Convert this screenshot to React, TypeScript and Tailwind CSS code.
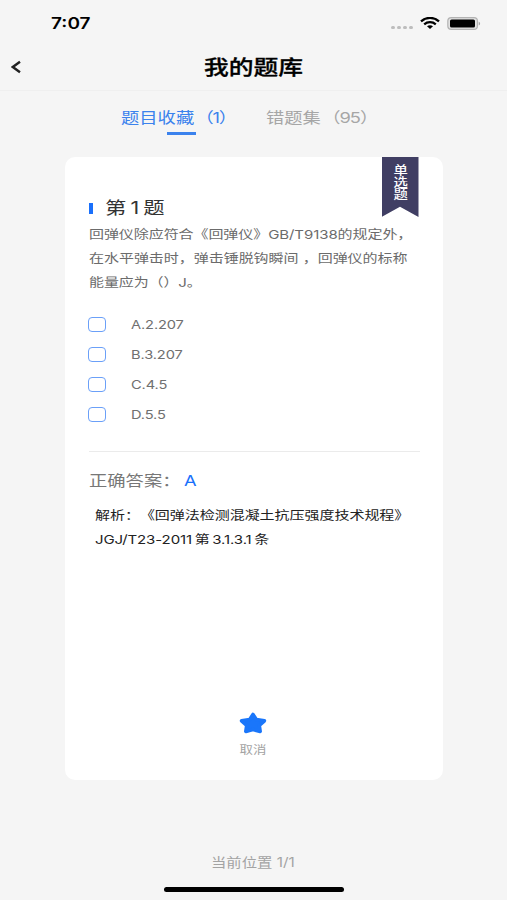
import type { ReactNode } from "react";
import clsx from "clsx";

const question = [
  { text: "回弹仪除应符合《回弹仪》GB/T9138的规定外，", tracking: "tracking-[-0.06px]" },
  { text: "在水平弹击时，弹击锤脱钩瞬间 ，回弹仪的标称", tracking: "tracking-[-0.03px]" },
  { text: "能量应为（）J。", tracking: "tracking-[-0.1px]" },
];

const options = ["A.2.207", "B.3.207", "C.4.5", "D.5.5"];

// Single line of horizontally expanded text
function Wide({
  children,
  className,
  origin = "origin-left",
}: {
  children: ReactNode;
  className?: string;
  origin?: string;
}) {
  return (
    <span className={clsx("block w-max scale-x-[1.22] whitespace-nowrap", origin, className)}>
      {children}
    </span>
  );
}

function StatusBar() {
  return (
    <div className="flex h-11 items-start pl-[51px] pr-[26px] pt-[14px]">
      <Wide className="text-[15.6px] font-semibold leading-[20px] text-black">7:07</Wide>
      <div className="ml-auto flex items-start">
        <div className="mr-[7px] mt-[12px] flex gap-[2px]">
          {[0, 1, 2, 3].map((i) => (
            <span key={i} className="h-[3px] w-[4px] rounded-full bg-[#bdbdbd]" />
          ))}
        </div>
        <svg className="mt-[3px] h-[12px] w-[20px]" viewBox="0 0 20 12" preserveAspectRatio="none" fill="none" stroke="#000" strokeWidth="2.3">
          <path d="M1 4.3C6.1-.2 13.9-.2 19 4.3" />
          <path d="M4.2 7.3C7.5 4.5 12.5 4.5 15.8 7.3" />
          <path d="M7 9.3C8.8 8 11.2 8 13 9.3L10 12Z" fill="#000" stroke="none" />
        </svg>
        <svg className="ml-[7px] mt-[3px] h-[13px] w-[34px]" viewBox="0 0 34 13">
          <rect x=".8" y=".7" width="29.6" height="11.6" rx="3.4" fill="#e2e2e2" stroke="#b3b3b3" strokeWidth="1.2" />
          <rect x="3" y="2.4" width="25" height="8.2" rx="1.6" fill="#000" />
          <path d="M31.7 4.4C33.6 5.2 33.6 7.8 31.7 8.6Z" fill="#a5a5a5" />
        </svg>
      </div>
    </div>
  );
}

function NavBar() {
  return (
    <div className="flex h-[47px] items-center border-b border-[#efefef]">
      <svg className="ml-[11px] h-[14px] w-[11px]" viewBox="0 0 11 14" fill="none" stroke="#222" strokeWidth="2.4">
        <path d="M9 1.7L1.8 7L9 12.3" />
      </svg>
      <Wide className="ml-[182px] mt-[2px] text-[20.3px] font-medium leading-[28px] text-black [-webkit-text-stroke:0.3px_black]">
        我的题库
      </Wide>
    </div>
  );
}

function Tabs() {
  return (
    <div className="flex h-[66px] pl-[121px] pt-[15.5px] text-[15px] leading-[22px]">
      <div className="w-[145px] text-[#3b82ed]">
        <Wide>
          题目收藏<span className="ml-[1px] tracking-[-1px]">（1）</span>
        </Wide>
        <div className="ml-[46px] mt-[3.5px] h-[3px] w-[29px] bg-[#3b82ed]" />
      </div>
      <Wide className="text-[#a6a6a6]">
        错题集<span className="ml-[1px] tracking-[-0.8px]">（95）</span>
      </Wide>
    </div>
  );
}

function Ribbon() {
  return (
    <div className="absolute right-[24px] top-0 flex h-[60px] w-[37px] justify-center bg-[#403e63] pr-[3px] pt-[7px] [clip-path:polygon(0_0,100%_0,100%_100%,50%_83%,0_100%)]">
      <span className="h-max scale-x-[1.2] text-[12px] font-medium leading-[14px] tracking-[0.2px] text-white [writing-mode:vertical-rl]">
        单选题
      </span>
    </div>
  );
}

function QuestionCard() {
  return (
    <div className="relative mx-auto flex h-[623px] w-[378px] flex-col rounded-[10px] bg-white pl-[24px] pr-[24px] pt-[38px]">
      <Ribbon />
      <div className="flex h-[26px] items-center">
        <span className="h-[11px] w-[4px] bg-[#1a70fb]" />
        <Wide className="ml-[12px] text-[17.5px] leading-[26px] text-[#333] [word-spacing:-1.6px]">第 1 题</Wide>
      </div>
      <div className="mt-[1.5px] text-[12.3px] leading-[24.3px] text-[#6b6b6b]">
        {question.map((line) => (
          <Wide key={line.text} className={line.tracking}>
            {line.text}
          </Wide>
        ))}
      </div>

      <div className="mt-[14.6px]">
        {options.map((option) => (
          <div key={option} className="flex h-[30px] items-center">
            <span className="-ml-px h-[15px] w-[18px] rounded-[4px] border-[1.5px] border-[#6ba0f8] bg-white" />
            <Wide className="ml-[25px] text-[12px] leading-[20px] tracking-[-0.1px] text-[#707070]">{option}</Wide>
          </div>
        ))}
      </div>

      <div className="mt-[21px] h-px w-[331px] bg-[#ebebeb]" />

      <div className="mt-[17px] flex h-[24px] items-center text-[15px]">
        <div className="w-[95px] text-[#777]">
          <Wide>正确答案：</Wide>
        </div>
        <Wide className="text-[#1a70fb]">A</Wide>
      </div>
      <div className="ml-[6px] mt-[11px] text-[12.3px] leading-[24.3px] text-[#222]">
        <Wide className="tracking-[-0.03px]">解析：《回弹法检测混凝土抗压强度技术规程》</Wide>
        <Wide className="tracking-[-0.08px] [word-spacing:-1.2px]">JGJ/T23-2011 第 3.1.3.1 条</Wide>
      </div>

      <div className="mb-[20px] mt-auto flex flex-col items-center pr-px">
        <svg className="h-[22px] w-[28px]" viewBox="0 0 28 22" preserveAspectRatio="none" fill="#1a76fa" stroke="#1a76fa" strokeWidth="3.6" strokeLinejoin="round">
          <path d="M14 2.4L17.3 7.5L25.4 8.8L20.3 13.4L21.2 19.4L14 17.6L6.8 19.4L7.7 13.4L2.6 8.8L10.7 7.5Z" />
        </svg>
        <Wide origin="origin-center" className="mt-[6px] text-[11px] leading-[20px] text-[#a3a3a3]">
          取消
        </Wide>
      </div>
    </div>
  );
}

export default function App() {
  return (
    <div className="flex h-[900px] w-[507px] flex-col overflow-hidden bg-[#f5f5f5] font-['Inter','Noto_Sans_CJK_SC',sans-serif] [text-spacing-trim:space-all]">
      <StatusBar />
      <NavBar />
      <Tabs />
      <QuestionCard />
      <Wide className="ml-[211px] mt-[73px] text-[12.6px] leading-[20px] text-[#a3a3a3]">当前位置 1/1</Wide>
      <div className="ml-[164px] mt-[14px] h-[5px] w-[180px] rounded-full bg-black" />
    </div>
  );
}
